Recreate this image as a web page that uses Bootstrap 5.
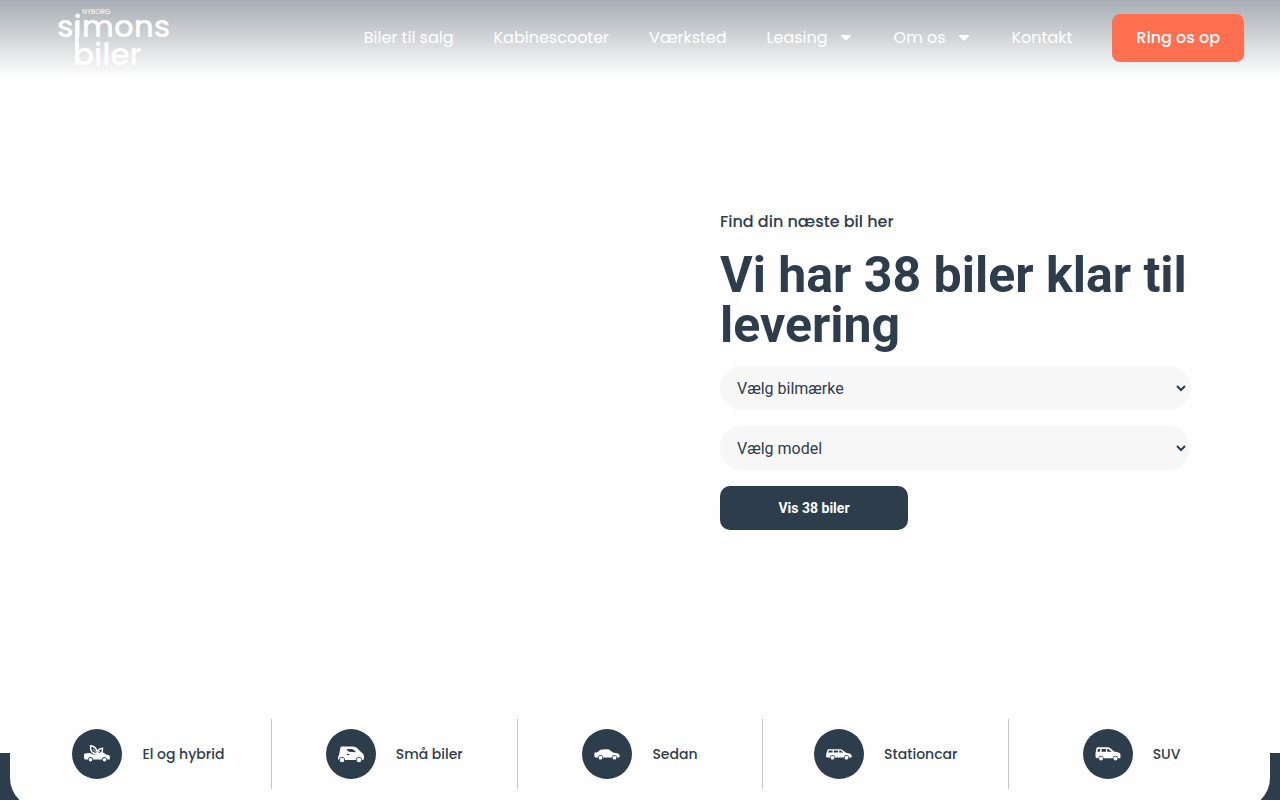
<!DOCTYPE html>
<html lang="da">
<head>
<meta charset="utf-8">
<meta name="viewport" content="width=device-width, initial-scale=1">
<title>Simons Biler Nyborg</title>
<link rel="stylesheet" href="https://cdn.jsdelivr.net/npm/bootstrap@5.3.0/dist/css/bootstrap.min.css">
<style>
  :root { --navy: #2e3d4c; --coral: #ff6f50; }
  body { color: var(--navy); background: #fefefe; font-family: Poppins, Lato, sans-serif; }
  .page { min-height: 100vh; max-height: 100vh; }
  .site-header { min-height: 76px; padding: 0 36px 0 58px; background: linear-gradient(180deg, #a8adb7 0, #b6bbbf 18%, #fefefe 100%); }
  .brand-logo { width: 116px; height: 68px; display: block; overflow: visible; }
  .menu { gap: 40px; }
  .menu a { color: #fff; text-decoration: none; font-size: 16px; line-height: 24px; }
  .arrow { width: 16px; margin-left: 10px; }
  .menu .btn-call { background: var(--coral); color: #fff; font-weight: 500; padding: 12px 24px; border: 0; border-radius: 8px; }
  .hero { padding-bottom: 46px; }
  .hero-text { padding: 0 90px 0 80px; }
  .eyebrow { font-size: 16px; line-height: 24px; font-weight: 500; margin-bottom: 16px; }
  .headline { font: 700 50px/50px Roboto, sans-serif; margin-bottom: 16px; }
  .picker { height: 44px; border: 1px solid #f7f7f7; border-radius: 22px; background: #f7f7f7; color: var(--navy); font: 400 16px/24px Roboto, sans-serif; padding: 1px 0 0 12px; }
  .btn-show { width: 40%; height: 44px; border-radius: 10px; border: 0; background: var(--navy); color: #fff; font: 700 14px/20px Roboto, sans-serif; }
  .band { padding: 0 10px; background: linear-gradient(180deg, transparent 44px, var(--navy) 44px); margin-bottom: -8px; }
  .types { background: #fefefe; border-radius: 0 0 30px 30px; padding: 10px 16px 19px; }
  .types .kind { height: 70px; gap: 20px; border-right: 1px solid #c3c5c9; font-size: 14px; line-height: 20px; font-weight: 500; color: var(--navy); text-decoration: none; }
  .types .kind:last-child { border-right: 0; }
  .disc { width: 50px; height: 50px; border-radius: 50%; background: var(--navy); }
</style>
</head>
<body>
<div class="page d-flex flex-column overflow-hidden">
  <header class="site-header d-flex align-items-center justify-content-between">
    <a href="#" aria-label="Simons Biler Nyborg">
      <svg class="brand-logo" viewBox="0 0 116 68" fill="#fff" font-family="Poppins, Lato, sans-serif" font-weight="500">
        <text x="24" y="10" font-size="7" font-weight="400">NYBORG</text>
        <text x="-1" y="33" font-size="31">simons</text>
        <text x="15" y="61" font-size="31">biler</text>
        <path d="M17 17h3.500v44H17z"/>
      </svg>
    </a>
    <nav class="menu d-flex align-items-center">
      <a href="#">Biler til salg</a>
      <a href="#">Kabinescooter</a>
      <a href="#">Værksted</a>
      <a href="#" class="d-flex align-items-center">Leasing<svg class="arrow" height="6" viewBox="0 0 16 6" fill="#fff"><path d="M3.500 0h9q1 .3 .4 1L9 5q-1 .8-2 0L3.100 1q-.5-.7.4-1z"/></svg></a>
      <a href="#" class="d-flex align-items-center">Om os<svg class="arrow" height="6" viewBox="0 0 16 6" fill="#fff"><path d="M3.500 0h9q1 .3 .4 1L9 5q-1 .8-2 0L3.100 1q-.5-.7.4-1z"/></svg></a>
      <a href="#">Kontakt</a>
      <button type="button" class="btn btn-call">Ring os op</button>
    </nav>
  </header>

  <main class="hero flex-grow-1 d-flex align-items-center">
    <div class="row g-0 w-100 justify-content-end">
      <div class="col-6 hero-text">
        <p class="eyebrow">Find din næste bil her</p>
        <h1 class="headline">Vi har 38 biler klar til levering</h1>
        <form class="d-flex flex-column gap-3">
          <select class="picker w-100" aria-label="Bilmærke"><option>Vælg bilmærke</option></select>
          <select class="picker w-100" aria-label="Model"><option>Vælg model</option></select>
          <button type="button" class="btn btn-show">Vis 38 biler</button>
        </form>
      </div>
    </div>
  </main>

  <section class="band">
    <div class="types">
      <div class="row g-0">
        <a href="#" class="kind col d-flex align-items-center justify-content-center">
          <span class="disc d-flex align-items-center justify-content-center">
            <svg width="26" height="18" viewBox="0 0 26 18" fill="#fff"><path d="M1 8.500L6 8q4 3 10 .5L18 7q2 .5 4 2.500l3 .7q1 .8 1 2.800l-.5 1.500H23a2.500 2.500 0 0 0-5 0H9a2.500 2.500 0 0 0-5 0H1q-1-.5-1-2V10q0-1.500 1-1.500z"/><circle cx="6.500" cy="14.800" r="1.800"/><circle cx="20.500" cy="14.800" r="1.800"/><path d="M6.500.800Q13 1.500 13.500 9 6 9 6.500.800zM18.500 3.200q.5 5.800-5 5.800-.5-5 5-5.800z" fill="#2e3d4c" stroke="#fff" stroke-width="1.400"/><path d="M9 4l4.500 5L16 6" fill="none" stroke="#fff" stroke-width=".8"/></svg>
          </span>El og hybrid</a>
        <a href="#" class="kind col d-flex align-items-center justify-content-center">
          <span class="disc d-flex align-items-center justify-content-center">
            <svg width="26" height="17" viewBox="0 0 26 17" fill="#fff"><path d="M4 .5h11q2 0 4 1.500L23 6q3 2 3 4v3l-1 1h-1a3 3 0 0 0-6 0H7a3 3 0 0 0-6 0l-1-1q0-3 1-4Q2 4 2.500 1.500 3 .5 4 .5z"/><circle cx="4" cy="14" r="2.300"/><circle cx="21" cy="14" r="2.300"/><path d="M9 3h5q2 .5 4 3.200l-7-.5Q9 5 9 3zM9 8h2.500v1H9z" fill="#2e3d4c"/></svg>
          </span>Små biler</a>
        <a href="#" class="kind col d-flex align-items-center justify-content-center">
          <span class="disc d-flex align-items-center justify-content-center">
            <svg width="26" height="11" viewBox="0 0 26 11" fill="#fff"><path d="M.5 3.500H3L6.500.800Q11 0 15 .500L19 3.500l5 1q1.500.5 1.500 1.500l.3 1.500-.8 1h-2a2.500 2.500 0 0 0-5 0H9a2.500 2.500 0 0 0-5 0H1.500L.3 7.500z"/><circle cx="6.500" cy="8.700" r="1.900"/><circle cx="20.500" cy="8.700" r="1.900"/></svg>
          </span>Sedan</a>
        <a href="#" class="kind col d-flex align-items-center justify-content-center">
          <span class="disc d-flex align-items-center justify-content-center">
            <svg width="26" height="11" viewBox="0 0 26 11" fill="#fff"><path d="M2 .3h12q1.500 0 3 1.200L20 3.700l4 1q1.500.5 1.500 1.500l.3 1.500-.8.800h-2a2.500 2.500 0 0 0-5 0H9a2.500 2.500 0 0 0-5 0H1L0 7.500Q0 3 2 .3z"/><circle cx="6.500" cy="8.700" r="1.900"/><circle cx="20.500" cy="8.700" r="1.900"/><path d="M3 1.500h3.500v2H2zM7.700 1.500H12v2H7.700zM13.200 1.500h1.500l2.800 2h-4.300z" fill="#2e3d4c"/></svg>
          </span>Stationcar</a>
        <a href="#" class="kind col d-flex align-items-center justify-content-center">
          <span class="disc d-flex align-items-center justify-content-center">
            <svg width="26" height="14" viewBox="0 0 26 14" fill="#fff"><path d="M2.500.3H13q1.500.2 3 1.500L19 4.500l4.500 1q2 .5 2 2.500v2.500l-.5.8h-2a2.500 2.500 0 0 0-5 0H8.500a2.500 2.500 0 0 0-5 0H1.500L.5 10V6.500Q1 3 1.500 1q.3-.7 1-.7z"/><circle cx="6" cy="11.500" r="2"/><circle cx="20.500" cy="11.500" r="2"/><path d="M3 2h2.200L4.800 4.800H2.300zM6.700 2H11v2.800H6.400zM12.200 2h1.300L16.800 4.800h-4.600z" fill="#2e3d4c"/></svg>
          </span>SUV</a>
      </div>
    </div>
  </section>
</div>
<script src="https://cdn.jsdelivr.net/npm/bootstrap@5.3.0/dist/js/bootstrap.bundle.min.js"></script>
</body>
</html>
